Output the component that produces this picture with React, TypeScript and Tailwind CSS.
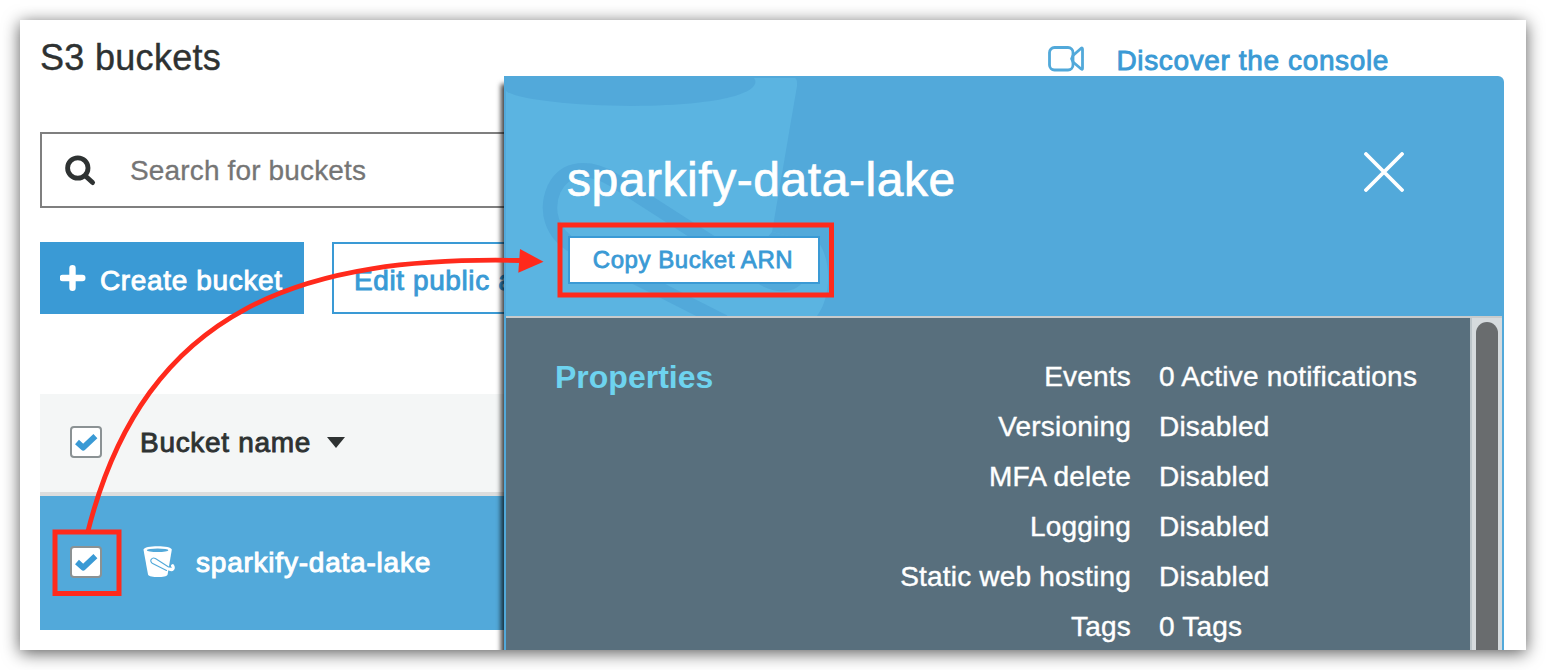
import React from "react";

const rows = [
  ["Events", "0 Active notifications"],
  ["Versioning", "Disabled"],
  ["MFA delete", "Disabled"],
  ["Logging", "Disabled"],
  ["Static web hosting", "Disabled"],
  ["Tags", "0 Tags"],
];

function Checkbox() {
  return (
    <span className="-mt-0.5 flex h-8 w-8 shrink-0 items-center justify-center rounded-[4px] border-2 border-[#8b9294] bg-white">
      <svg width="24" height="22" viewBox="0 0 24 22">
        <path d="M3 11 L9.2 16.6 L21.4 5.2" fill="none" stroke="#3a9ad5" strokeWidth="5.8" strokeLinejoin="round" />
      </svg>
    </span>
  );
}

function BucketIcon() {
  return (
    <svg width="32" height="32" viewBox="0 0 32 32" className="shrink-0">
      <path d="M0.5 3.8 C0.5 -0.8 28.8 -0.8 28.8 3.8 L24.6 28.4 C23.5 32 6.5 32 5 28.4 Z" fill="#fff" />
      <ellipse cx="14.6" cy="4.2" rx="10.8" ry="1.7" fill="#52a9da" />
      <path d="M14 15.2 L26.4 23 C29.6 24.6 31 22.2 29.6 19.8" fill="none" stroke="#fff" strokeWidth="3.2" strokeLinecap="round" />
      <path d="M27.2 20.2 C26.9 21.2 26 21.2 25.2 20.7 L12.4 12.6 C9 10.8 5.8 14.8 9.2 17.2 L23.5 24.4" fill="none" stroke="#52a9da" strokeWidth="1.1" strokeLinecap="round" />
    </svg>
  );
}

function Watermark() {
  return (
    <svg className="absolute left-0.5 top-0.5" width="340" height="238" viewBox="506 78 340 238">
      <path d="M506 78 H795 Q797.5 79 797 86 L772 232 L819 243 C832 262 831 298 817 316 H506 Z" fill="#5bb4e1" />
      <path d="M506 78 H754 C761 87 745 105 632 106 C570 106 515 99 506 91 Z" fill="#52a9da" />
      <path d="M768 279 L612 179 C590 166 565 166 554 189 C545 210 551 234 575 247 L655 287 L724 322" fill="none" stroke="#52a9da" strokeWidth="14.5" />
      <path d="M772 232 L819 243 C816 264 809 276 802 283 C793 294 774 294 757 283 L740 270 Z" fill="#52a9da" />
    </svg>
  );
}

export default function App() {
  return (
    <div className="h-[670px] w-[1546px] overflow-hidden bg-white p-5 font-['Liberation_Sans',Arial,sans-serif] text-[28px] leading-8 text-[#2e3232]">
      <div className="relative h-[630px] w-[1506px] bg-white shadow-[0_3px_16px_rgba(0,0,0,0.65)]">
        <div className="relative flex h-full flex-col overflow-hidden px-5">
          <header className="flex h-[112px] shrink-0 items-start justify-between pt-[18px]">
            <h1 className="text-[36px] leading-10 tracking-[0.3px] [-webkit-text-stroke:0.4px]">S3 buckets</h1>
            <a className="mr-[117px] flex items-center pt-[7px] text-[#3a9ad5]">
              <svg width="36" height="28" viewBox="0 0 36 28" fill="none" stroke="#52a9da" strokeWidth="2.8" strokeLinejoin="round" className="mb-1 mr-8">
                <rect x="1.5" y="2.5" width="23.5" height="22.5" rx="5" />
                <path d="M25 10.5 L33.2 3.2 Q34.5 2.5 34.5 4.2 V23.3 Q34.5 25 33.2 24 L25 17 L23.6 13.7 Z" />
              </svg>
              <span className="tracking-[0.63px] [-webkit-text-stroke:0.9px]">Discover the console</span>
            </a>
          </header>
          <div className="w-[484px] shrink-0 overflow-hidden">
            <div className="flex h-[76px] items-center border-2 border-r-0 border-[#7f7f7f] pl-[22px] text-[#757575]">
              <svg width="32" height="32" viewBox="0 0 32 32" fill="none" stroke="#2e3232" strokeLinecap="round" className="mr-[34px]">
                <circle cx="13.8" cy="14" r="10.2" strokeWidth="4.8" />
                <path d="M22 22.4 L28.6 28.6" strokeWidth="4.8" />
              </svg>
              <span className="pt-0.5 tracking-[0.15px] [-webkit-text-stroke:0.3px]">Search for buckets</span>
            </div>
            <div className="mt-[34px] flex h-[72px] gap-7">
              <button className="flex w-[264px] shrink-0 items-center bg-[#3a9ad5] pl-5 pt-1.5 text-white">
                <svg width="26" height="26" viewBox="0 0 26 26" className="mb-1.5 mr-3.5 shrink-0">
                  <path d="M12.5 3.2 V22.8 M2.7 13 H22.3" stroke="#fff" strokeWidth="6.4" strokeLinecap="round" />
                </svg>
                <span className="whitespace-nowrap tracking-[0.65px] [-webkit-text-stroke:0.9px]">Create bucket</span>
              </button>
              <button className="flex flex-1 items-center overflow-hidden whitespace-nowrap border-2 border-r-0 border-[#3a9ad5] pl-5 pt-1.5 tracking-[0.6px] text-[#3a9ad5] [-webkit-text-stroke:0.9px]">
                Edit public a
              </button>
            </div>
            <div className="mt-20 flex h-[102px] items-center border-b-4 border-[#dcdddd] bg-[#f4f6f6] pl-[30px]">
              <Checkbox />
              <span className="ml-[38px] tracking-[0.7px] [-webkit-text-stroke:0.9px]">Bucket name</span>
              <svg width="18" height="11" viewBox="0 0 18 11" className="-mt-0.5 ml-4">
                <path d="M0 0 H18 L9 11 Z" fill="#2e3232" />
              </svg>
            </div>
            <div className="flex h-[134px] items-center bg-[#52a9da] pl-[30px] text-white">
              <Checkbox />
              <span className="-mt-0.5 ml-[41px]"><BucketIcon /></span>
              <span className="ml-[21px] tracking-[0.78px] [-webkit-text-stroke:1px]">sparkify-data-lake</span>
            </div>
          </div>

          <section className="absolute left-[484px] top-14 h-[620px] w-[1000px] rounded-tr-[6px] bg-[#52a9da] shadow-[-4px_7px_5px_-1px_rgba(0,0,0,0.75)]">
            <Watermark />
            <div className="relative h-60 pl-16 pt-[78px] text-white">
              <div className="flex items-start justify-between pr-[100px]">
                <h2 className="-ml-px text-[48px] leading-[52px] tracking-[0.55px] [-webkit-text-stroke:0.7px]">sparkify-data-lake</h2>
                <svg width="40" height="40" viewBox="0 0 40 40" className="-mt-0.5" stroke="#fff" strokeWidth="3.8" strokeLinecap="round">
                  <path d="M2 2 L38 38 M38 2 L2 38" />
                </svg>
              </div>
              <button className="mt-[30px] h-12 w-[252px] border-2 border-[#3a9ad5] bg-white pr-0.5 text-[24px] tracking-[0.55px] text-[#3a9ad5] [-webkit-text-stroke:0.8px]">
                Copy Bucket ARN
              </button>
            </div>
            <div className="relative mx-0.5 flex h-[380px] border-t-2 border-[#c8cbcc] bg-[#586f7d] text-white">
              <h3 className="w-[340px] pl-[49px] pt-[41px] text-[32px] font-bold leading-9 text-[#6ed3ef]">Properties</h3>
              <dl className="flex flex-1 flex-col pt-[34px] leading-[50px]">
                {rows.map(([k, v]) => (
                  <div key={k} className="flex h-[50px] gap-7 whitespace-nowrap tracking-[0.2px] [-webkit-text-stroke:0.4px]">
                    <dt className="w-[285px] text-right">{k}</dt>
                    <dd>{v}</dd>
                  </div>
                ))}
              </dl>
              <div className="flex w-8 justify-center border-l-2 border-[#bcc5ca] bg-[#d6dbde] pt-1">
                <div className="h-full w-[22px] rounded-t-full bg-[#696c6e]" />
              </div>
            </div>
          </section>
          <div className="absolute left-[1484px] top-14 h-[574px] w-[22px] bg-white [clip-path:inset(6px_0_0_0)]" />
        </div>
        <svg className="pointer-events-none absolute -left-5 -top-5" width="1546" height="670" viewBox="0 0 1546 670" fill="none" stroke="#ff2a1c">
          <rect x="55" y="532" width="64" height="61.5" strokeWidth="5" />
          <rect x="560" y="225" width="271.5" height="70" strokeWidth="5" />
          <path d="M87.5 533 C145 303 308 256 521 260.5" strokeWidth="4.8" />
          <path d="M520 249 L543.5 261.7 L518.3 272.8 Z" fill="#ff2a1c" stroke="none" />
        </svg>
      </div>
    </div>
  );
}
